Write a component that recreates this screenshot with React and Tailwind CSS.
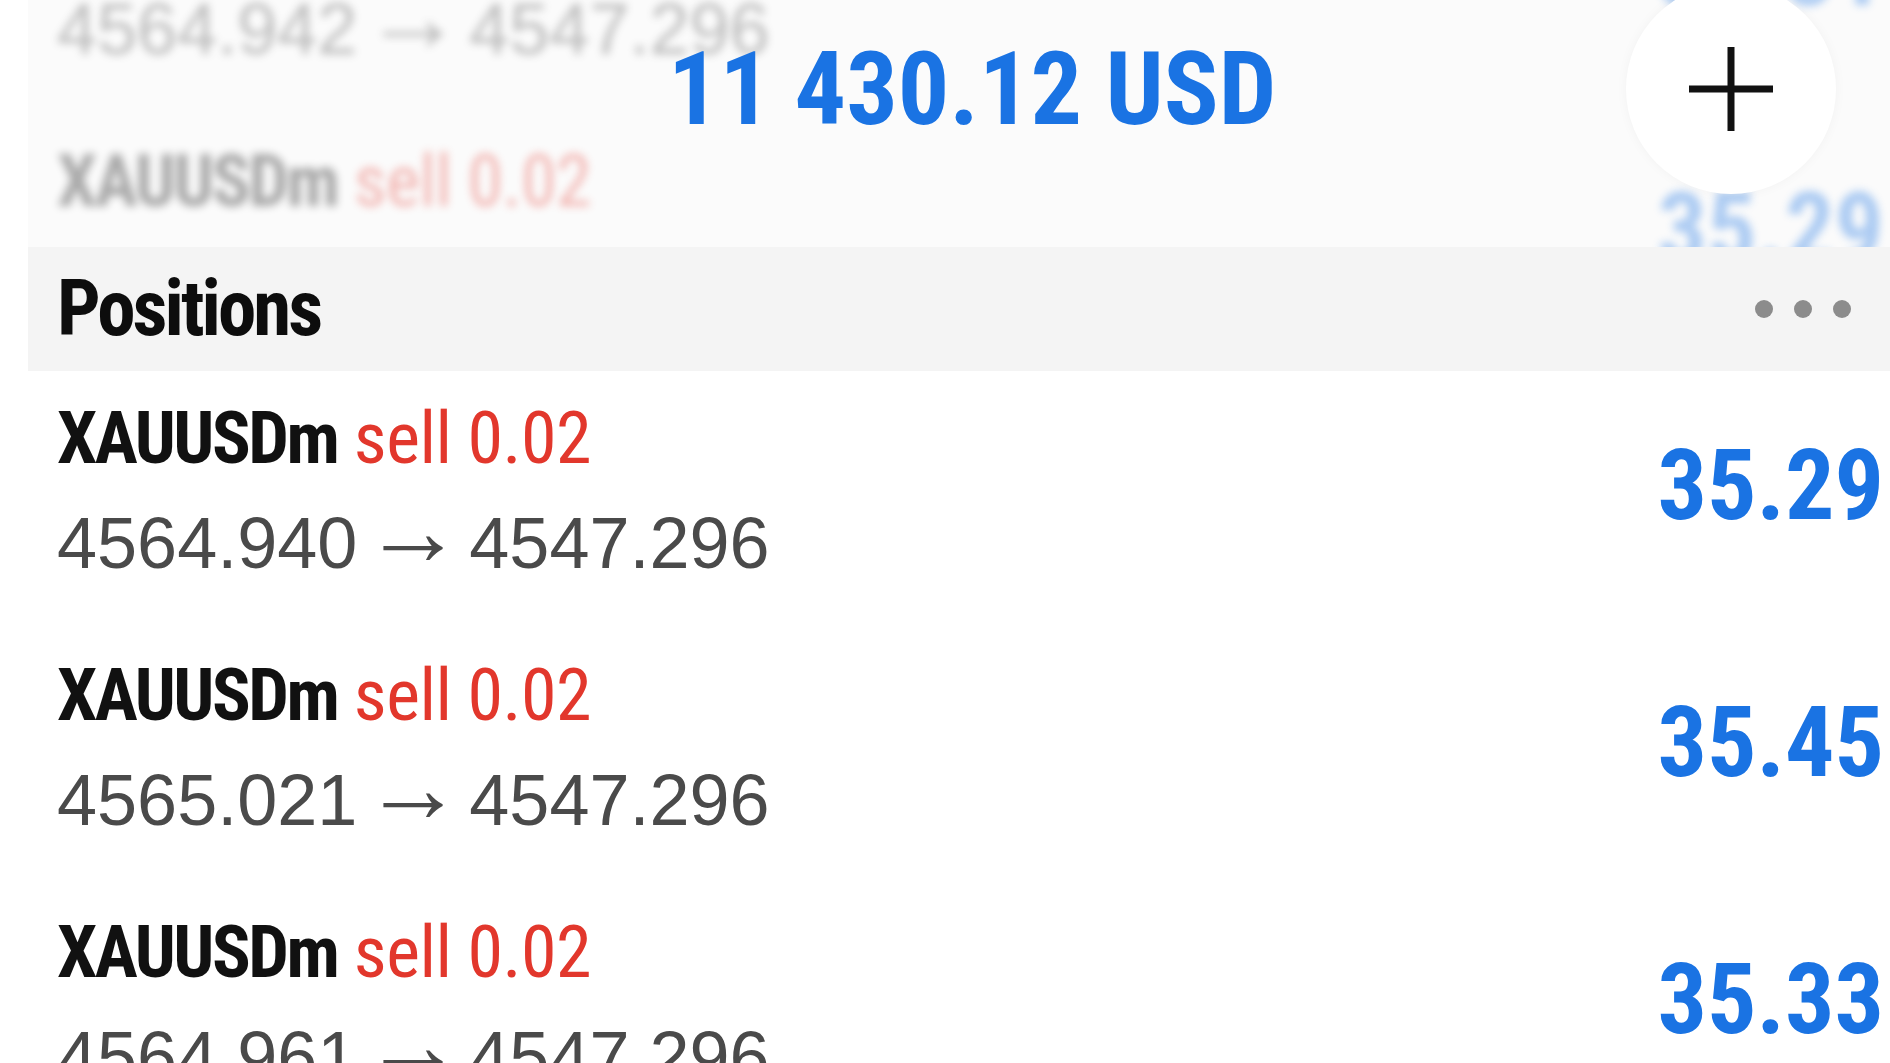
const cond = "font-['Roboto_Condensed','Liberation_Sans',sans-serif]";
const arial = "font-['Liberation_Sans',Arial,sans-serif]";

const positions = [
  { open: "4564.940", value: "35.29" },
  { open: "4565.021", value: "35.45" },
  { open: "4564.961", value: "35.33" },
];

// rows scrolled under the top bar
const hidden = [
  { open: "4564.942", value: "35.31" },
  { open: "4564.940", value: "35.29" },
];

function PositionRow({ open, value }) {
  return (
    <div className="flex h-[257px] items-start justify-between pl-[29px] pr-[6px] pt-[31px]">
      <div className="flex flex-col gap-[30px]">
        <div className={`${cond} whitespace-nowrap text-[72px] leading-[74px]`}>
          <span className="font-bold tracking-[-2.5px] text-[#111]">XAUUSDm</span>{" "}
          <span className="tracking-[-0.5px] text-[#e2372c]">sell 0.02</span>
        </div>
        <div className={`${arial} whitespace-nowrap text-[72px] leading-[74px] text-[#4a4a4a]`}>
          {open}<span className="mx-[6px] align-[3px] text-[100px] leading-[0]">→</span>4547.296
        </div>
      </div>
      <div className={`${cond} mt-[31px] text-[98px] font-bold leading-[106px] text-[#1a73e3]`}>
        {value}
      </div>
    </div>
  );
}

export default function App() {
  return (
    <div className="h-screen w-full overflow-hidden bg-white">
      <div className="ml-[28px]">
        <div className="relative h-[247px] overflow-hidden bg-[#fbfbfb]">
          <div className="-mt-[143px] opacity-35 blur-[4px]">
            {hidden.map((p, i) => (
              <PositionRow key={i} {...p} />
            ))}
          </div>

          <div
            className={`${cond} absolute left-[640px] top-[37px] whitespace-nowrap text-[102px] font-bold leading-[104px] text-[#1a73e3]`}
          >
            11 430.12 USD
          </div>

          <div className="absolute left-[1598px] top-[-16px] flex size-[210px] items-center justify-center rounded-full bg-white shadow-[0_0_12px_rgba(0,0,0,0.04)]">
            <svg width="88" height="88" viewBox="0 0 88 88">
              <path d="M44 2v84M2 44h84" stroke="#111" strokeWidth="7" />
            </svg>
          </div>
        </div>

        <div className="flex h-[124px] items-center justify-between bg-[#f4f4f4] pl-[29px] pr-[39px]">
          <div className={`${cond} text-[77px] font-bold leading-[77px] tracking-[-3px] text-[#0d0d0d]`}>
            Positions
          </div>
          <div className="flex gap-[21px]">
            <span className="size-[18px] rounded-full bg-[#8c8c8c]" />
            <span className="size-[18px] rounded-full bg-[#8c8c8c]" />
            <span className="size-[18px] rounded-full bg-[#8c8c8c]" />
          </div>
        </div>
      </div>

      <div className="ml-[28px]">
        {positions.map((p, i) => (
          <PositionRow key={i} {...p} />
        ))}
      </div>
    </div>
  );
}
